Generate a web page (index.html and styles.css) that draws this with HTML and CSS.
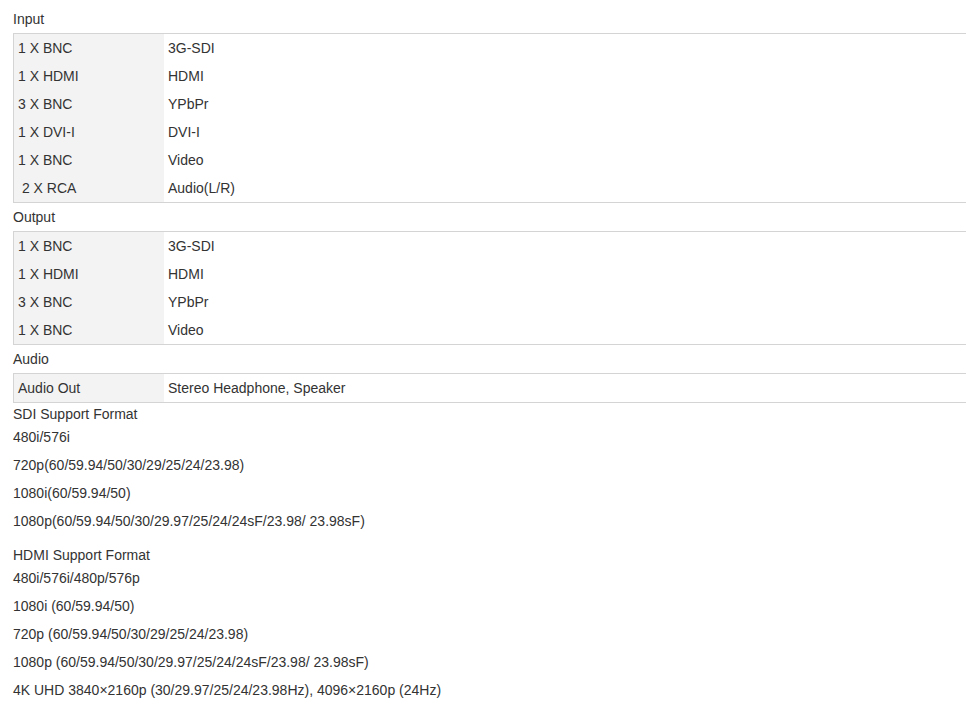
FILE: index.html
```html
<html>
<head>
<title>Specifications</title>
<link rel="stylesheet" href="styles.css">
</head>
<body>
<div class="specs">
<div class="group-title">Input</div>
<table class="spec-table">
<tr><td class="port">1 X BNC</td><td>3G-SDI</td></tr>
<tr><td class="port">1 X HDMI</td><td>HDMI</td></tr>
<tr><td class="port">3 X BNC</td><td>YPbPr</td></tr>
<tr><td class="port">1 X DVI-I</td><td>DVI-I</td></tr>
<tr><td class="port">1 X BNC</td><td>Video</td></tr>
<tr><td class="port">&nbsp;2 X RCA</td><td>Audio(L/R)</td></tr>
</table>
<div class="group-title">Output</div>
<table class="spec-table">
<tr><td class="port">1 X BNC</td><td>3G-SDI</td></tr>
<tr><td class="port">1 X HDMI</td><td>HDMI</td></tr>
<tr><td class="port">3 X BNC</td><td>YPbPr</td></tr>
<tr><td class="port">1 X BNC</td><td>Video</td></tr>
</table>
<div class="group-title">Audio</div>
<table class="spec-table">
<tr><td class="port">Audio Out</td><td>Stereo Headphone, Speaker</td></tr>
</table>
<div class="formats">
<div class="formats-title">SDI Support Format</div>
<p>480i/576i</p>
<p>720p(60/59.94/50/30/29/25/24/23.98)</p>
<p>1080i(60/59.94/50)</p>
<p>1080p(60/59.94/50/30/29.97/25/24/24sF/23.98/ 23.98sF)</p>
</div>
<div class="formats">
<div class="formats-title">HDMI Support Format</div>
<p>480i/576i/480p/576p</p>
<p>1080i (60/59.94/50)</p>
<p>720p (60/59.94/50/30/29/25/24/23.98)</p>
<p>1080p (60/59.94/50/30/29.97/25/24/24sF/23.98/ 23.98sF)</p>
<p>4K UHD 3840×2160p (30/29.97/25/24/23.98Hz), 4096×2160p (24Hz)</p>
</div>
</div>
</body>
</html>
```

FILE: styles.css
```css
body {
font-family: "Liberation Sans", Arial, sans-serif;
font-size: 14px;
color: #333;
margin: 0;
padding: 5px 0 0 13px;
background-color: white;
overflow-x: hidden;
}
.group-title {
height: 28px;
line-height: 28px;
}
.spec-table {
width: 100%;
font-size: 14px;
color: #333;
border-collapse: collapse;
border: 1px solid #d4d4d4;
border-right: none;
}
.spec-table td {
height: 28px;
padding: 0 4px;
line-height: 28px;
}
.spec-table td.port {
width: 142px;
background-color: #f3f3f3;
}
.formats {
margin-top: 1px;
padding-bottom: 5px;
}
.formats-title {
line-height: 20px;
margin-bottom: 3px;
}
.formats p {
margin: 0 0 8px 0;
line-height: 20px;
}
```
